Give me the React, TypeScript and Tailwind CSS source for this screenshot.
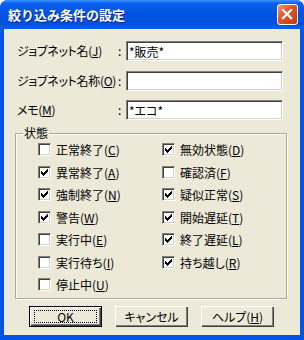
import type { ReactNode } from "react";

const font = "font-['MS_UI_Gothic','Noto_Sans_CJK_JP',sans-serif] [font-feature-settings:'palt']";

function Key({ k }: { k: string }) {
  return (
    <>
      (<span className="underline underline-offset-[1px]">{k}</span>)
    </>
  );
}

function Field({ label, k, value, className }: { label: string; k: string; value: string; className?: string }) {
  return (
    <div className={`flex h-[20px] items-center ${className ?? ""}`}>
      <span className="w-[114px] shrink-0 pl-[13px] tracking-[-0.3px] whitespace-nowrap">
        {label}
        <Key k={k} />
      </span>
      <span className="w-[8px] shrink-0">:</span>
      <div className="h-[20px] w-[157px] border-t border-l border-[#808080] border-r border-b border-r-white border-b-white bg-white shadow-[inset_1px_1px_0_#404040,inset_-1px_-1px_0_#d4d0c8]">
        <div className="px-[2px] pt-[2px] leading-[16px]">{value}</div>
      </div>
    </div>
  );
}

function Check({ label, k, checked }: { label: string; k: string; checked?: boolean }) {
  return (
    <div className="flex h-[13px] items-center gap-[5px]">
      <div className="relative h-[13px] w-[13px] shrink-0 border-t border-l border-[#808080] border-r border-b border-r-white border-b-white bg-white shadow-[inset_1px_1px_0_#404040,inset_-1px_-1px_0_#d4d0c8]">
        {checked && (
          <svg viewBox="0 0 11 11" className="absolute left-0 top-0 h-[11px] w-[11px]" shapeRendering="crispEdges">
            <path d="M2 4h1v1h1v1h1V5h1V4h1V3h1V2h1v3H8v1H7v1H6v1H5v1H4V8H3V7H2z" fill="#000" />
          </svg>
        )}
      </div>
      <span className="whitespace-nowrap leading-[13px]">
        {label}
        <Key k={k} />
      </span>
    </div>
  );
}

function Button({ children, primary }: { children: ReactNode; primary?: boolean }) {
  return (
    <div
      className={`flex h-[21px] w-[73px] items-center justify-center bg-[#ece9d8] ${
        primary
          ? "border border-black shadow-[inset_1px_1px_0_#fff,inset_-1px_-1px_0_#404040,inset_-2px_-2px_0_#808080]"
          : "shadow-[inset_1px_1px_0_#fff,inset_-1px_-1px_0_#404040,inset_-2px_-2px_0_#808080]"
      }`}
    >
      {primary ? (
        <div className="flex h-[13px] w-[63px] items-center justify-center border border-dotted border-black leading-[12px]">
          {children}
        </div>
      ) : (
        <span className="leading-[12px]">{children}</span>
      )}
    </div>
  );
}

export default function App() {
  return (
    <div className={`flex h-[340px] w-[304px] flex-col overflow-hidden rounded-t-[8px] bg-[#0053e6] text-[12px] text-black ${font}`}>
      <div className="flex h-[29px] shrink-0 items-center justify-between bg-[linear-gradient(180deg,#3d95ff_0%,#0a5ff0_12%,#0055e5_45%,#0050dd_80%,#0a5ef0_100%)] pl-[8px] pr-[6px]">
        <span className="text-[13px] font-bold text-white [font-feature-settings:normal] [text-shadow:1px_1px_0_#0a1f8a]">
          絞り込み条件の設定
        </span>
        <div className="flex h-[21px] w-[21px] items-center justify-center rounded-[3px] border border-white bg-[linear-gradient(135deg,#f29a78_0%,#e4542a_40%,#c8380e_100%)]">
          <svg viewBox="0 0 21 21" className="h-[21px] w-[21px]">
            <path d="M5.5 5.5L14.5 14.5M14.5 5.5L5.5 14.5" stroke="#fff" strokeWidth="2.4" strokeLinecap="square" />
          </svg>
        </div>
      </div>
      <div className="mx-[4px] mb-[5px] flex-1 bg-[#ece9d8] pt-[12px]">
        <Field label="ジョブネット名" k="J" value="*販売*" />
        <Field label="ジョブネット名称" k="O" value="" className="mt-[10px]" />
        <Field label="メモ" k="M" value="*エコ*" className="mt-[9px]" />
        <fieldset className="ml-[11px] mt-[6px] h-[173px] w-[272px] border border-[#aca899] px-0 pb-0 shadow-[inset_1px_1px_0_#fff,1px_1px_0_#fff]">
          <legend className="ml-[7px] px-[1px] leading-[14px]">状態</legend>
          <div className="grid grid-cols-[124px_1fr] pl-[22px] pt-[3px]">
            <div className="flex flex-col gap-[9.5px]">
              <Check label="正常終了" k="C" />
              <Check label="異常終了" k="A" checked />
              <Check label="強制終了" k="N" checked />
              <Check label="警告" k="W" checked />
              <Check label="実行中" k="E" />
              <Check label="実行待ち" k="I" />
              <Check label="停止中" k="U" />
            </div>
            <div className="flex flex-col gap-[9.5px]">
              <Check label="無効状態" k="D" checked />
              <Check label="確認済" k="F" />
              <Check label="疑似正常" k="S" checked />
              <Check label="開始遅延" k="T" checked />
              <Check label="終了遅延" k="L" checked />
              <Check label="持ち越し" k="R" checked />
            </div>
          </div>
        </fieldset>
        <div className="ml-[25px] mt-[7px] flex gap-[13px]">
          <Button primary>OK</Button>
          <Button>キャンセル</Button>
          <Button>
            ヘルプ
            <Key k="H" />
          </Button>
        </div>
      </div>
    </div>
  );
}
